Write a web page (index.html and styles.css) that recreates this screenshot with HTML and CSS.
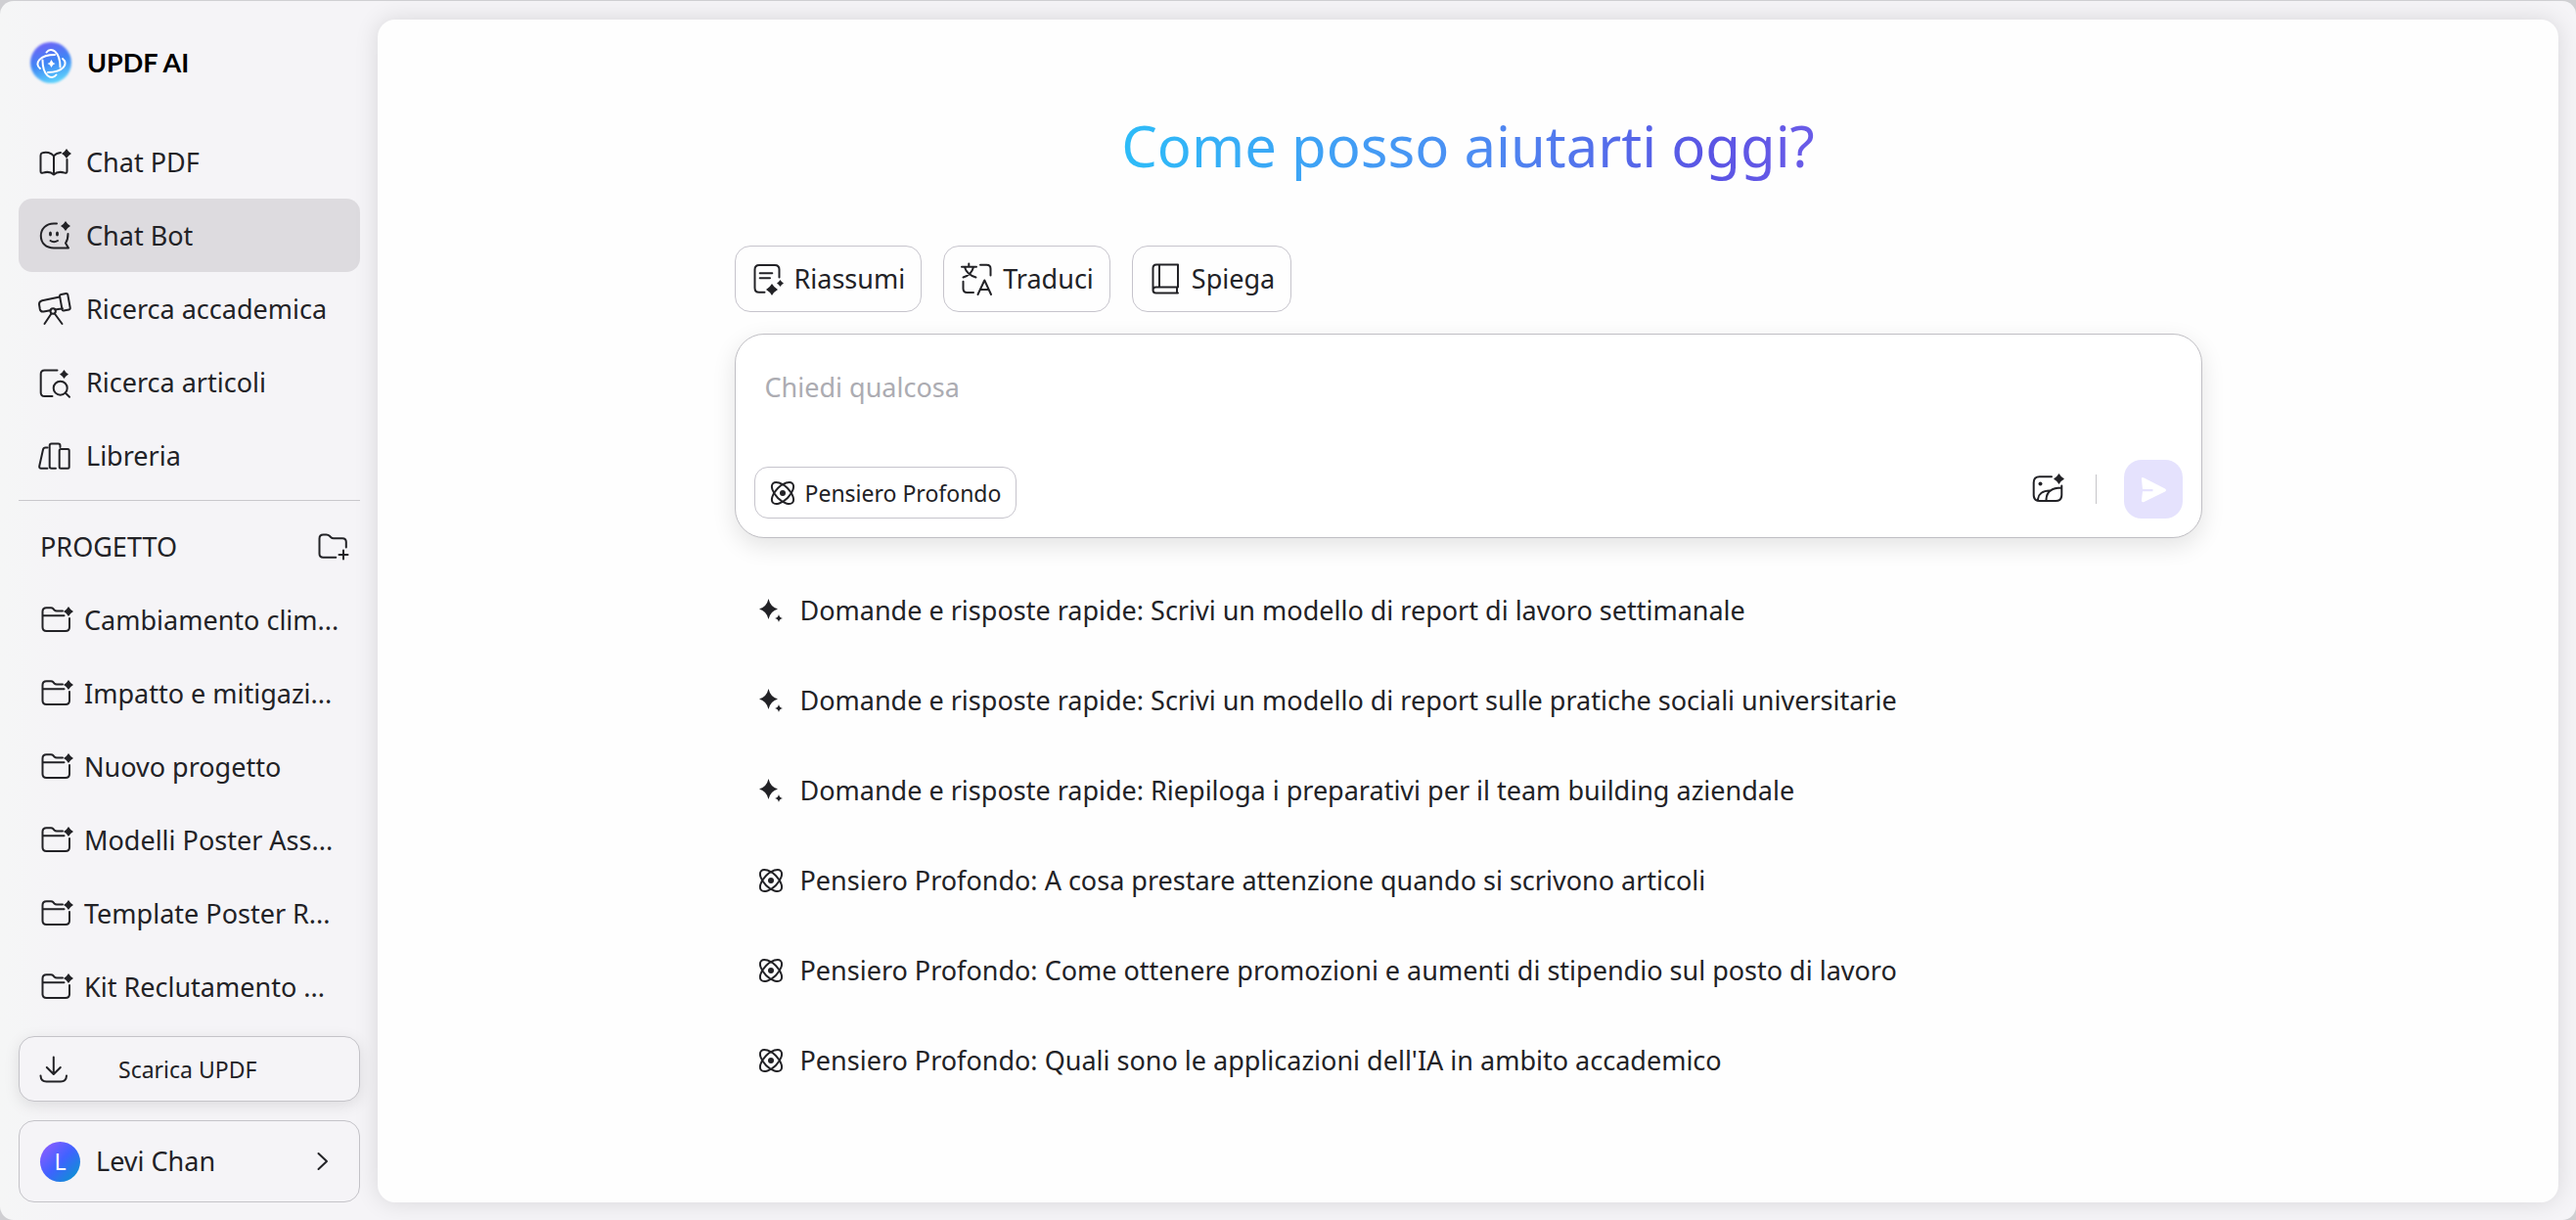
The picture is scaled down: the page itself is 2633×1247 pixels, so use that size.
FILE: index.html
```html
<!DOCTYPE html>
<html lang="it">
<head>
    <meta charset="UTF-8">
    <title>UPDF AI</title>
    <link rel="stylesheet" href="styles.css">
</head>
<body>
    <!-- Icone condivise -->
    <svg class="sprite" aria-hidden="true">
        <symbol id="star" viewBox="-5 -5 10 10">
            <path d="M0 -5Q1.8 -1.8 5 0Q1.8 1.8 0 5Q-1.8 1.8 -5 0Q-1.8 -1.8 0 -5Z" fill="currentColor" stroke="none"/>
        </symbol>
        <symbol id="folder" viewBox="0 0 34 34">
            <path d="M23 7.5H17Q15.5 7.5 14.5 6.5L13.5 5.3Q12.5 4.3 11 4.3H6.5Q2.5 4.3 2.5 8.3V24Q2.5 28 6.5 28H26Q30 28 30 24V15M2.5 12.3H24.5"/>
            <use href="#star" x="24" y="3" width="10" height="10"/>
        </symbol>
        <symbol id="sparkle" viewBox="0 0 26 26">
            <path d="M10.5 1Q12.5 9.5 20 11.5Q12.5 13.5 10.5 22Q8.5 13.5 1 11.5Q8.5 9.5 10.5 1Z" fill="currentColor" stroke="none"/>
            <path d="M21 17Q21.7 20.3 25 21Q21.7 21.7 21 25Q20.3 21.7 17 21Q20.3 20.3 21 17Z" fill="currentColor" stroke="none"/>
        </symbol>
        <symbol id="atom" viewBox="0 0 26 26">
            <ellipse cx="13" cy="13" rx="14" ry="7" transform="rotate(45 13 13)"/>
            <ellipse cx="13" cy="13" rx="14" ry="7" transform="rotate(-45 13 13)"/>
            <circle cx="13" cy="13" r="3" fill="currentColor" stroke="none"/>
        </symbol>
    </svg>

    <div class="app">
        <aside class="sidebar">
            <a class="brand" href="#">
                <svg class="brand-logo" viewBox="0 0 46 46">
                    <defs>
                        <linearGradient id="logoFill" x1="0.3" y1="0" x2="0.6" y2="1">
                            <stop offset="0" stop-color="#6f62f6"/>
                            <stop offset="0.5" stop-color="#3f86f5"/>
                            <stop offset="1" stop-color="#5fd6fc"/>
                        </linearGradient>
                        <path id="petal" d="M-5 -11.5C0 -18 9 -12 9 3.5"/>
                    </defs>
                    <circle class="logo-glow" cx="23" cy="23" r="21" fill="url(#logoFill)"/>
                    <g fill="none" stroke="#fff" stroke-width="2" stroke-linecap="round" transform="translate(23.5 24)">
                        <use href="#petal"/>
                        <use href="#petal" transform="rotate(90)"/>
                        <use href="#petal" transform="rotate(180)"/>
                        <use href="#petal" transform="rotate(270)"/>
                    </g>
                    <path d="M23.5 20Q24.5 23 27.5 24Q24.5 25 23.5 28Q22.5 25 19.5 24Q22.5 23 23.5 20Z" fill="#fff"/>
                </svg>
                <span class="brand-name">UPDF AI</span>
            </a>

            <nav class="menu">
                <a class="menu-item" href="#">
                    <svg class="icon" viewBox="0 0 34 34">
                        <path d="M16 10.5C13.5 7 8 5.8 4 7.4Q2.5 8 2.5 10V26Q2.5 28.5 5 27.6C9 26.4 13 26.5 16 29.5C19 26.5 23 26.4 27 27.6Q29.5 28.5 29.5 26V14M16 10.5V29.5M16 10.5C17.5 8.5 19.5 7.5 23 7"/>
                        <use href="#star" x="24" y="3" width="10" height="10"/>
                    </svg>
                    Chat PDF
                </a>
                <a class="menu-item active" href="#">
                    <svg class="icon" viewBox="0 0 34 34">
                        <path d="M19 4.5H16C8 4.5 2.8 10 2.8 17C2.8 24.5 8 29.5 16 29.5H31L28 24.5Q30.5 21 30.5 15M12.5 22Q16 24.5 20 22"/>
                        <ellipse cx="12.5" cy="15" rx="1.5" ry="2.5" fill="currentColor" stroke="none"/>
                        <ellipse cx="19.5" cy="15" rx="1.5" ry="2.5" fill="currentColor" stroke="none"/>
                        <use href="#star" x="23" y="2" width="10" height="10"/>
                    </svg>
                    Chat Bot
                </a>
                <a class="menu-item" href="#">
                    <svg class="icon" viewBox="0 0 34 34">
                        <path d="M22 4.5L4 8.2Q1 9 1 12L1.8 17Q2.5 20 5.5 19.5L12.5 18.3M17.5 17.5L25 16.2M22 3.5Q22 2.3 23.5 2L28.5 1Q30 0.8 30.3 2.3L32.7 15.5Q33 17.2 31.5 17.5L26 18.5Q24.8 18.7 24.5 17.3ZM13.5 21.5L6.5 32M16.8 21.5L24.5 32"/>
                        <circle cx="15.2" cy="19" r="2.7"/>
                    </svg>
                    Ricerca accademica
                </a>
                <a class="menu-item" href="#">
                    <svg class="icon" viewBox="0 0 34 34">
                        <path d="M19.5 4.5H6.5Q2.7 4.5 2.7 8.3V27.2Q2.7 31 6.5 31H14.5M27.7 27.5L32 31.7"/>
                        <circle cx="22.7" cy="22.7" r="7"/>
                        <use href="#star" x="22" y="4" width="9" height="9"/>
                    </svg>
                    Ricerca articoli
                </a>
                <a class="menu-item" href="#">
                    <svg class="icon" viewBox="0 0 34 34">
                        <path d="M9.5 8.5H7.5Q5.5 8.5 5 10.5L1.2 27.5Q1 29.8 3 29.8H9.5M22.5 8V6.5Q22.5 4.5 20.5 4.5H13.7Q11.7 4.5 11.7 6.5V27.8Q11.7 29.8 13.7 29.8H18"/>
                        <rect x="21.7" y="10" width="10" height="19.8" rx="1.5"/>
                    </svg>
                    Libreria
                </a>
            </nav>

            <section class="projects">
                <header class="projects-header">
                    <h2>PROGETTO</h2>
                    <button class="icon-button" aria-label="Nuovo progetto">
                        <svg class="icon" viewBox="0 0 34 34">
                            <path d="M19.3 27.7H6.3Q2.5 27.7 2.5 24V8.5Q2.5 4.5 6.5 4.5H9.5Q11.5 4.5 12.8 5.8L14 7Q15.3 8.3 17 8.3H26Q29.8 8.3 29.8 12V17.5M27 20.5V29.5M22.5 25H31.5"/>
                        </svg>
                    </button>
                </header>
                <a class="project" href="#"><svg class="icon"><use href="#folder"/></svg>Cambiamento clim...</a>
                <a class="project" href="#"><svg class="icon"><use href="#folder"/></svg>Impatto e mitigazi...</a>
                <a class="project" href="#"><svg class="icon"><use href="#folder"/></svg>Nuovo progetto</a>
                <a class="project" href="#"><svg class="icon"><use href="#folder"/></svg>Modelli Poster Ass...</a>
                <a class="project" href="#"><svg class="icon"><use href="#folder"/></svg>Template Poster R...</a>
                <a class="project" href="#"><svg class="icon"><use href="#folder"/></svg>Kit Reclutamento ...</a>
            </section>

            <div class="sidebar-footer">
                <button class="download">
                    <svg class="icon" viewBox="0 0 34 34">
                        <path d="M15.8 4.5V21.5M8.8 15L15.8 22L22.8 15M2.5 23.5Q2.8 29.5 8.5 29.5H23Q28.7 29.5 29 23.5"/>
                    </svg>
                    Scarica UPDF
                </button>
                <button class="account">
                    <span class="avatar">L</span>
                    <span class="account-name">Levi Chan</span>
                    <svg class="chevron" viewBox="0 0 12 20"><path d="M1.5 2L10 10L1.5 18"/></svg>
                </button>
            </div>
        </aside>

        <main class="panel">
            <div class="content">
                <h1 class="title">Come posso aiutarti oggi?</h1>

                <div class="actions">
                    <button class="action">
                        <svg class="icon" viewBox="0 0 34 34">
                            <path d="M13.5 30.7H8Q3.5 30.7 3.5 26.2V7.5Q3.5 3 8 3H24Q28.5 3 28.5 7.5V15.5M8.7 11.3H21.3M8.7 16.3H19"/>
                            <use href="#star" x="15" y="22" width="12" height="12"/>
                            <use href="#star" x="26" y="18" width="7" height="7"/>
                        </svg>
                        Riassumi
                    </button>
                    <button class="action">
                        <svg class="icon" viewBox="0 0 34 34">
                            <path d="M2 4.8H17M9.3 1.5V4.8M14 5Q12 13 3.5 15.5M5 5Q7 12.5 16.5 15.5M21 2.7H27.5Q31.5 2.7 31.5 6.7V13.5M3.5 19.7V27Q3.5 31 7.5 31H14M18.5 33L25.3 18.5L32 33M21 28H29.5"/>
                        </svg>
                        Traduci
                    </button>
                    <button class="action">
                        <svg class="icon" viewBox="0 0 34 34">
                            <path d="M30 25.5V2.5H8Q4.5 2.5 4.5 6V28.5Q4.5 31.5 7.5 31.5H30M4.5 28.5Q4.5 25.5 7.5 25.5H30M11 2.5V25.5M29 25.5V31.5"/>
                        </svg>
                        Spiega
                    </button>
                </div>

                <form class="composer">
                    <textarea class="prompt" placeholder="Chiedi qualcosa" aria-label="Chiedi qualcosa"></textarea>
                    <div class="toolbar">
                        <button type="button" class="chip">
                            <svg class="icon-small"><use href="#atom"/></svg>
                            Pensiero Profondo
                        </button>
                        <button type="button" class="icon-button upload" aria-label="Carica immagine">
                            <svg class="icon" viewBox="0 0 34 34">
                                <path d="M21 7.3H8.7Q2.7 7.3 2.7 13.3V26Q2.7 32 8.7 32H25.3Q31.3 32 31.3 26V16.5M7 31.5C7 25 12 21.5 19 21.5M15.5 31.5C15.5 23 21 18.5 31 18.5"/>
                                <circle cx="9.5" cy="14.5" r="2" fill="currentColor" stroke="none"/>
                                <use href="#star" x="23" y="4" width="11" height="11"/>
                            </svg>
                        </button>
                        <span class="separator"></span>
                        <button type="submit" class="send" aria-label="Invia">
                            <svg viewBox="0 0 60 60"><path d="M18 20Q17.5 17 20.5 18.5L42 29.5Q44 31 42 32.5L20.5 43Q17.5 44 18 41L19 32.2H29.5V30H19Z" fill="#fff"/></svg>
                        </button>
                    </div>
                </form>

                <div class="suggestions">
                    <a class="suggestion" href="#"><svg class="icon-small"><use href="#sparkle"/></svg>Domande e risposte rapide: Scrivi un modello di report di lavoro settimanale</a>
                    <a class="suggestion" href="#"><svg class="icon-small"><use href="#sparkle"/></svg>Domande e risposte rapide: Scrivi un modello di report sulle pratiche sociali universitarie</a>
                    <a class="suggestion" href="#"><svg class="icon-small"><use href="#sparkle"/></svg>Domande e risposte rapide: Riepiloga i preparativi per il team building aziendale</a>
                    <a class="suggestion" href="#"><svg class="icon-small"><use href="#atom"/></svg>Pensiero Profondo: A cosa prestare attenzione quando si scrivono articoli</a>
                    <a class="suggestion" href="#"><svg class="icon-small"><use href="#atom"/></svg>Pensiero Profondo: Come ottenere promozioni e aumenti di stipendio sul posto di lavoro</a>
                    <a class="suggestion" href="#"><svg class="icon-small"><use href="#atom"/></svg>Pensiero Profondo: Quali sono le applicazioni dell'IA in ambito accademico</a>
                </div>
            </div>
        </main>
    </div>
</body>
</html>
```
FILE: styles.css
```css
* {
    margin: 0;
    padding: 0;
    box-sizing: border-box;
}

body {
    min-height: 100vh;
    display: flex;
    padding-top: 1px;
    background: #cfcfd2;
    font-family: 'Segoe UI', 'Noto Sans', sans-serif;
    font-size: 27px;
    line-height: 36px;
    color: #222226;
}

button,
textarea {
    font: inherit;
    color: inherit;
    background: none;
    border: none;
}

button {
    cursor: pointer;
}

a {
    color: inherit;
    text-decoration: none;
}

.sprite {
    position: absolute;
    width: 0;
    height: 0;
}

.icon,
.icon-small,
.chevron {
    flex: none;
    fill: none;
    stroke: currentColor;
    stroke-width: 2;
    stroke-linecap: round;
    stroke-linejoin: round;
    overflow: visible;
}

.icon {
    width: 34px;
    height: 34px;
}

.icon-small {
    width: 26px;
    height: 26px;
}

.icon-button {
    display: flex;
}

.app {
    flex: 1;
    display: flex;
    border-radius: 14px;
    background: linear-gradient(90deg, #f5f6f6, #f5f4f7 70px);
    padding: 19px 18px 18px 0;
}

/* Barra laterale */
.sidebar {
    width: 386px;
    flex: none;
    display: flex;
    flex-direction: column;
    padding: 0 18px 0 19px;
}

.brand {
    display: flex;
    align-items: center;
    gap: 14px;
    height: 88px;
    padding-left: 10px;
    margin-bottom: 20px;
}

.brand-logo {
    width: 46px;
    height: 46px;
    overflow: visible;
}

.logo-glow {
    filter: blur(1px);
}

.brand-name {
    font-family: Lato, sans-serif;
    font-size: 27px;
    font-weight: 700;
    color: #000;
}

.menu {
    padding-bottom: 8px;
    border-bottom: 1px solid #c9c8cc;
}

.menu-item,
.project {
    display: flex;
    align-items: center;
    height: 75px;
    border-radius: 14px;
    white-space: nowrap;
}

.menu-item {
    gap: 15px;
    padding-left: 20px;
}

.menu-item.active {
    background: #dddbdf;
}

.project {
    gap: 11px;
    padding-left: 22px;
}

.projects {
    padding-top: 9px;
}

.projects-header {
    display: flex;
    align-items: center;
    justify-content: space-between;
    height: 75px;
    padding: 0 10px 0 22px;
}

.projects-header h2 {
    font-size: 27px;
    font-weight: 400;
}

.sidebar-footer {
    display: flex;
    flex-direction: column;
    gap: 19px;
    margin-top: auto;
}

.download,
.account {
    display: flex;
    align-items: center;
    border: 1px solid #c4c3c8;
    border-radius: 16px;
    background: #f5f4f7;
}

.download {
    gap: 48px;
    height: 67px;
    padding-left: 19px;
    font-size: 23px;
    box-shadow: 0 4px 16px rgba(0, 0, 0, 0.1);
}

.account {
    gap: 16px;
    height: 84px;
    padding: 0 31px 0 21px;
}

.avatar {
    width: 41px;
    height: 41px;
    border-radius: 50%;
    background: linear-gradient(135deg, #9a5cff, #4062ff 50%, #009cc8);
    color: #fff;
    font-size: 23px;
    line-height: 41px;
}

.chevron {
    width: 12px;
    height: 20px;
    margin-left: auto;
}

/* Pannello principale */
.panel {
    flex: 1;
    border-radius: 18px;
    background: #fefefe;
    box-shadow: 0 0 24px rgba(0, 0, 0, 0.12);
}

.content {
    width: 90%;
    max-width: 1500px;
    margin: 0 auto;
    padding-top: 89px;
}

.title {
    width: fit-content;
    margin: 0 auto 62px;
    font-size: 58px;
    font-weight: 400;
    line-height: 80px;
    background: linear-gradient(90deg, #2dbcf8, #4c8ef3 50%, #5a54e4 85%, #6a5ce8);
    background-clip: text;
    color: transparent;
}

.actions {
    display: flex;
    gap: 22px;
    margin-bottom: 22px;
}

.action {
    display: flex;
    align-items: center;
    gap: 10px;
    height: 68px;
    padding: 0 16px;
    border: 1px solid #c6c4cc;
    border-radius: 16px;
}

.composer {
    height: 209px;
    display: flex;
    flex-direction: column;
    padding: 36px 19px 19px;
    border: 1px solid #c0bfc4;
    border-radius: 30px;
    background: #fff;
    box-shadow: 0 8px 24px rgba(0, 0, 0, 0.11);
}

.prompt {
    flex: 1;
    padding: 0 11px;
    resize: none;
    outline: none;
}

.prompt::placeholder {
    color: #acacb2;
}

.toolbar {
    display: flex;
    align-items: flex-end;
}

.chip {
    display: flex;
    align-items: center;
    gap: 10px;
    height: 53px;
    padding: 0 15px;
    border: 1px solid #c6c4cc;
    border-radius: 14px;
    font-size: 23px;
}

.upload {
    margin-left: auto;
    margin-bottom: 16px;
}

.separator {
    width: 1px;
    height: 30px;
    margin: 0 28px 15px 32px;
    background: #c6c5c9;
}

.send {
    width: 60px;
    height: 60px;
    border-radius: 18px;
    background: #e5e2fd;
}

.suggestions {
    padding: 28px 24px;
}

.suggestion {
    display: flex;
    align-items: center;
    gap: 17px;
    height: 92px;
}
```
